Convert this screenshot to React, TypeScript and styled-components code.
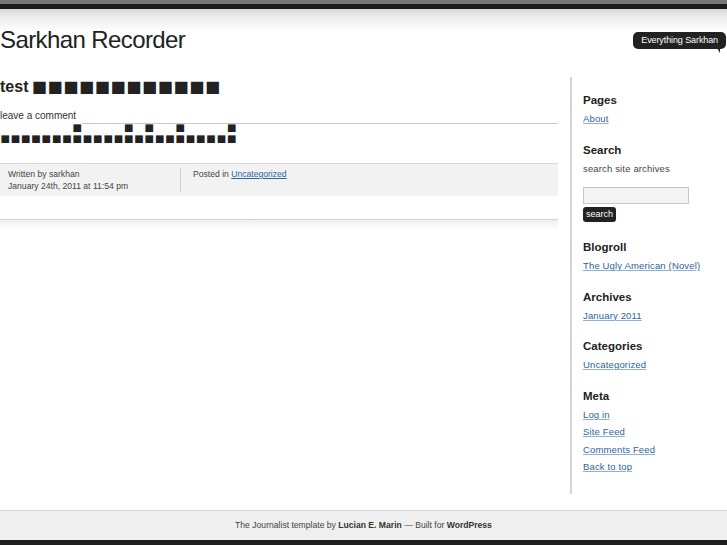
import React from 'react'
import styled, {createGlobalStyle} from 'styled-components'

const GlobalStyle = createGlobalStyle`
  html, body {
    margin: 0;
    padding: 0;
    background: #fff;
  }
  body {
    font-family: "Liberation Sans", Arial, sans-serif;
    color: #333;
  }
`

const Page = styled.div`
  width: 727px;
  overflow: hidden;
`

const TopBar = styled.div`
  height: 4px;
  background: #787878;
  border-bottom: 5px solid #1b1b1b;
`

const Header = styled.header`
  display: flex;
  justify-content: space-between;
  align-items: flex-start;
  height: 68px;
  padding-top: 17px;
  box-sizing: border-box;
  background: linear-gradient(#d9d9d9 0px, #efefef 10px, #fff 24px);
`

const SiteTitle = styled.h1`
  margin: 0;
  font-size: 24px;
  line-height: 28px;
  font-weight: 400;
  letter-spacing: -0.6px;
  color: #222;
`

const Bubble = styled.div`
  position: relative;
  margin-top: 6px;
  margin-right: 1px;
  padding: 0 8px;
  height: 17px;
  line-height: 17px;
  border-radius: 5px;
  background: #222;
  color: #fff;
  font-size: 9px;
  letter-spacing: -0.1px;

  &::after {
    content: '';
    position: absolute;
    right: 6px;
    bottom: -4px;
    border-left: 3px solid transparent;
    border-top: 5px solid #222;
  }
`

const Layout = styled.div`
  display: flex;
  align-items: flex-start;
`

const Main = styled.main`
  width: 558px;
  flex: none;
`

const PostTitle = styled.h2`
  margin: 0;
  font-size: 16px;
  line-height: 20px;
  font-weight: 700;
  color: #222;
  white-space: nowrap;
`

const CommentRow = styled.div`
  display: flex;
  align-items: flex-end;
  margin-top: 14px;
  font-size: 10px;
  line-height: 10px;
  color: #333;
`

const CommentRule = styled.div`
  flex: 1;
  margin-left: 6px;
  margin-bottom: -3px;
  border-bottom: 1px solid #c8c8c8;
`

const TofuLine = styled.div<{$cell: number; $size: number; $height: number}>`
  display: flex;
  height: ${p => p.$height}px;
  line-height: ${p => p.$height}px;
  font-family: "DejaVu Sans", sans-serif;
  font-size: ${p => p.$size}px;
  color: #222;
  overflow: hidden;

  & > span {
    display: inline-block;
    width: ${p => p.$cell}px;
    flex: none;
    text-align: center;
  }
`

const TitleTofu = styled.span`
  display: inline-flex;
  vertical-align: top;
  margin-left: 3px;
  font-family: "DejaVu Sans", sans-serif;
  font-size: 16px;
  line-height: 20px;
  color: #222;

  & > span {
    display: inline-block;
    width: 15.75px;
    text-align: center;
  }
`

const Content = styled.div`
  margin-top: 1px;
`

const MetaBox = styled.div`
  display: flex;
  margin-top: 19px;
  padding: 4px 0;
  border-top: 1px solid #d8d8d8;
  background: #f2f2f2;
  font-size: 8.6px;
  line-height: 12px;
  color: #444;
`

const MetaAuthor = styled.div`
  width: 172px;
  padding-left: 8px;
  border-right: 1px solid #cfcfcf;
`

const MetaCategory = styled.div`
  padding-left: 12px;
`

const InlineLink = styled.a`
  color: #2c639c;
  text-decoration: underline;
`

const CommentsBar = styled.div`
  margin-top: 23px;
  height: 9px;
  border-top: 1px solid #d6d6d6;
  background: linear-gradient(#efefef, #fff);
`

const Sidebar = styled.aside`
  flex: 1;
  margin-left: 12px;
  padding: 16px 0 18px 11px;
  border-left: 2px solid #d4d4d4;
`

const Widget = styled.section`
  & + & {
    margin-top: 14.75px;
  }
`

const WidgetTitle = styled.h3`
  margin: 0 0 3.25px;
  font-size: 11.5px;
  line-height: 14px;
  font-weight: 700;
  color: #222;
`

const WidgetList = styled.ul`
  margin: 0;
  padding: 0;
  list-style: none;
`

const WidgetItem = styled.li`
  font-size: 9.5px;
  line-height: 17.5px;
  letter-spacing: 0.15px;
`

const WidgetLink = styled.a`
  color: #2c639c;
  text-decoration: underline;
  text-decoration-color: #8fb0cf;
`

const WidgetText = styled.p`
  margin: 0;
  font-size: 9.5px;
  line-height: 17.5px;
  letter-spacing: 0.15px;
  color: #444;
`

const SearchForm = styled.form`
  display: flex;
  flex-direction: column;
  align-items: flex-start;
  gap: 3px;
  margin: 10px 0 0;
  padding-bottom: 3px;
`

const SearchInput = styled.input`
  display: block;
  box-sizing: border-box;
  width: 106px;
  height: 17px;
  margin: 0;
  border: 1px solid #c8c8c8;
  background: #f3f3f3;
`

const SearchButton = styled.button`
  display: block;
  height: 15px;
  padding: 0 3px;
  border: none;
  border-radius: 3px;
  background: #222;
  color: #fff;
  font-family: "Liberation Sans", Arial, sans-serif;
  font-size: 9px;
  line-height: 15px;
`

const Footer = styled.footer`
  margin-top: 16px;
  height: 30px;
  box-sizing: border-box;
  border-top: 1px solid #d6d6d6;
  background: #efefef;
  text-align: center;
  font-size: 8.6px;
  line-height: 28px;
  color: #444;

  b {
    color: #333;
  }
`

const BottomBar = styled.div`
  height: 5px;
  background: #1e1e1e;
`

const Tofu = ({pattern}: {pattern: string}) => (
  <>
    {pattern.split('').map((c, i) => (
      <span key={i}>{c === '#' ? '■' : '\u00a0'}</span>
    ))}
  </>
)

const widgets: {title: string; links: string[]}[] = [
  {title: 'Blogroll', links: ['The Ugly American (Novel)']},
  {title: 'Archives', links: ['January 2011']},
  {title: 'Categories', links: ['Uncategorized']},
  {title: 'Meta', links: ['Log in', 'Site Feed', 'Comments Feed', 'Back to top']},
]

export default function App() {
  return (
    <Page>
      <GlobalStyle />
      <TopBar />
      <Header>
        <SiteTitle>Sarkhan Recorder</SiteTitle>
        <Bubble>Everything Sarkhan</Bubble>
      </Header>
      <Layout>
        <Main>
          <PostTitle>
            test
            <TitleTofu>
              <Tofu pattern="############" />
            </TitleTofu>
          </PostTitle>
          <CommentRow>
            leave a comment
            <CommentRule />
          </CommentRow>
          <Content>
            <TofuLine $cell={10.3} $size={10} $height={11}>
              <Tofu pattern=".......#....#.#..#....#" />
            </TofuLine>
            <TofuLine $cell={10.3} $size={10} $height={11}>
              <Tofu pattern="#######################" />
            </TofuLine>
          </Content>
          <MetaBox>
            <MetaAuthor>
              Written by sarkhan
              <br />
              January 24th, 2011 at 11:54 pm
            </MetaAuthor>
            <MetaCategory>
              Posted in <InlineLink href="#">Uncategorized</InlineLink>
            </MetaCategory>
          </MetaBox>
          <CommentsBar />
        </Main>
        <Sidebar>
          <Widget>
            <WidgetTitle>Pages</WidgetTitle>
            <WidgetList>
              <WidgetItem><WidgetLink href="#">About</WidgetLink></WidgetItem>
            </WidgetList>
          </Widget>
          <Widget>
            <WidgetTitle>Search</WidgetTitle>
            <WidgetText>search site archives</WidgetText>
            <SearchForm onSubmit={e => e.preventDefault()}>
              <SearchInput type="text" />
              <SearchButton type="submit">search</SearchButton>
            </SearchForm>
          </Widget>
          {widgets.map(w => (
            <Widget key={w.title}>
              <WidgetTitle>{w.title}</WidgetTitle>
              <WidgetList>
                {w.links.map(l => (
                  <WidgetItem key={l}><WidgetLink href="#">{l}</WidgetLink></WidgetItem>
                ))}
              </WidgetList>
            </Widget>
          ))}
        </Sidebar>
      </Layout>
      <Footer>
        The Journalist template by <b>Lucian E. Marin</b> — Built for <b>WordPress</b>
      </Footer>
      <BottomBar />
    </Page>
  )
}
